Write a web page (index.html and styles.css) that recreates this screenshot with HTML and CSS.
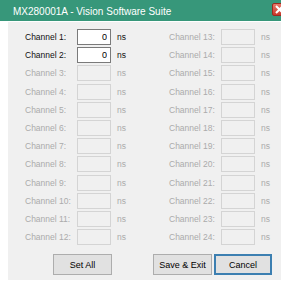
FILE: index.html
```html
<!DOCTYPE html>
<html lang="en">
<head>
    <meta charset="UTF-8">
    <meta name="viewport" content="width=device-width, initial-scale=1.0">
    <title>MX280001A - Vision Software Suite</title>
    <link rel="stylesheet" href="styles.css">
</head>
<body>
    <div class="window">
        <div class="titlebar">
            <span class="title">MX280001A - Vision Software Suite</span>
            <span class="close">
                <svg width="9" height="9" viewBox="0 0 9 9"><path d="M1 1L8 8M8 1L1 8" stroke="#ffffff" stroke-width="2"/></svg>
            </span>
        </div>
        <div class="client">
            <div class="channels">
                <div class="column">
                    <div class="row"><label>Channel 1:</label><input type="text" value="0"><span class="unit">ns</span></div>
                    <div class="row"><label>Channel 2:</label><input type="text" value="0"><span class="unit">ns</span></div>
                    <div class="row off"><label>Channel 3:</label><input type="text" disabled><span class="unit">ns</span></div>
                    <div class="row off"><label>Channel 4:</label><input type="text" disabled><span class="unit">ns</span></div>
                    <div class="row off"><label>Channel 5:</label><input type="text" disabled><span class="unit">ns</span></div>
                    <div class="row off"><label>Channel 6:</label><input type="text" disabled><span class="unit">ns</span></div>
                    <div class="row off"><label>Channel 7:</label><input type="text" disabled><span class="unit">ns</span></div>
                    <div class="row off"><label>Channel 8:</label><input type="text" disabled><span class="unit">ns</span></div>
                    <div class="row off"><label>Channel 9:</label><input type="text" disabled><span class="unit">ns</span></div>
                    <div class="row off"><label>Channel 10:</label><input type="text" disabled><span class="unit">ns</span></div>
                    <div class="row off"><label>Channel 11:</label><input type="text" disabled><span class="unit">ns</span></div>
                    <div class="row off"><label>Channel 12:</label><input type="text" disabled><span class="unit">ns</span></div>
                </div>
                <div class="column">
                    <div class="row off"><label>Channel 13:</label><input type="text" disabled><span class="unit">ns</span></div>
                    <div class="row off"><label>Channel 14:</label><input type="text" disabled><span class="unit">ns</span></div>
                    <div class="row off"><label>Channel 15:</label><input type="text" disabled><span class="unit">ns</span></div>
                    <div class="row off"><label>Channel 16:</label><input type="text" disabled><span class="unit">ns</span></div>
                    <div class="row off"><label>Channel 17:</label><input type="text" disabled><span class="unit">ns</span></div>
                    <div class="row off"><label>Channel 18:</label><input type="text" disabled><span class="unit">ns</span></div>
                    <div class="row off"><label>Channel 19:</label><input type="text" disabled><span class="unit">ns</span></div>
                    <div class="row off"><label>Channel 20:</label><input type="text" disabled><span class="unit">ns</span></div>
                    <div class="row off"><label>Channel 21:</label><input type="text" disabled><span class="unit">ns</span></div>
                    <div class="row off"><label>Channel 22:</label><input type="text" disabled><span class="unit">ns</span></div>
                    <div class="row off"><label>Channel 23:</label><input type="text" disabled><span class="unit">ns</span></div>
                    <div class="row off"><label>Channel 24:</label><input type="text" disabled><span class="unit">ns</span></div>
                </div>
            </div>
            <div class="buttons">
                <button class="btn set-all">Set All</button>
                <button class="btn save">Save &amp; Exit</button>
                <button class="btn cancel">Cancel</button>
            </div>
        </div>
    </div>
</body>
</html>
```

FILE: styles.css
```css
body {
    margin: 0;
    background: #ffffff;
    font-family: "Liberation Sans", Arial, sans-serif;
    overflow: hidden;
}

.window {
    width: 281px;
    height: 283px;
    overflow: hidden;
}

.titlebar {
    height: 21px;
    background: #37977a;
    display: flex;
    align-items: center;
    margin-bottom: 1px;
}

.title {
    color: #ffffff;
    font-size: 10px;
    padding-left: 13px;
    padding-top: 1px;
}

/* close button runs off the right edge of the capture */
.close {
    margin-left: auto;
    margin-right: -14px;
    margin-top: -3px;
    width: 23px;
    height: 13px;
    background: linear-gradient(#e8796a, #c8382a);
    border: 1px solid #9c2a20;
    border-radius: 2px;
    padding: 1px 0 0 2px;
    box-sizing: border-box;
    display: flex;
}

.client {
    margin-left: 8px;
    height: 258px;
    background: #f0f0f0;
    padding: 7px 0 0 17px;
    box-sizing: border-box;
}

.channels {
    display: grid;
    grid-template-columns: 144px 120px;
}

.column {
    display: flex;
    flex-direction: column;
    gap: 2.2px;
}

.row {
    display: flex;
    align-items: center;
    height: 16px;
    font-size: 8.5px;
    color: #111111;
}

.row label {
    width: 52px;
}

.row input {
    width: 34px;
    height: 16px;
    box-sizing: border-box;
    margin: 0;
    border: 1px solid #7a7a7a;
    background: #ffffff;
    font-family: "Liberation Sans", Arial, sans-serif;
    font-size: 9px;
    text-align: right;
    padding: 0 3px 0 0;
    color: #000000;
}

.unit {
    margin-left: 6px;
}

.row.off {
    color: #ababab;
}

.row.off input {
    border-color: #d4d4d4;
    background: #f0f0f0;
}

.buttons {
    display: flex;
    margin-top: 9px;
    padding-left: 28px;
}

.btn {
    width: 59px;
    height: 21px;
    margin: 0;
    background: #e1e1e1;
    border: 1px solid #adadad;
    font-family: "Liberation Sans", Arial, sans-serif;
    font-size: 9px;
    font-weight: normal;
    color: #000000;
    padding: 0;
}

.save {
    margin-left: 41px;
}

.cancel {
    margin-left: 2px;
    width: 58px;
    border: 2px solid #3c7fb1;
}
```
